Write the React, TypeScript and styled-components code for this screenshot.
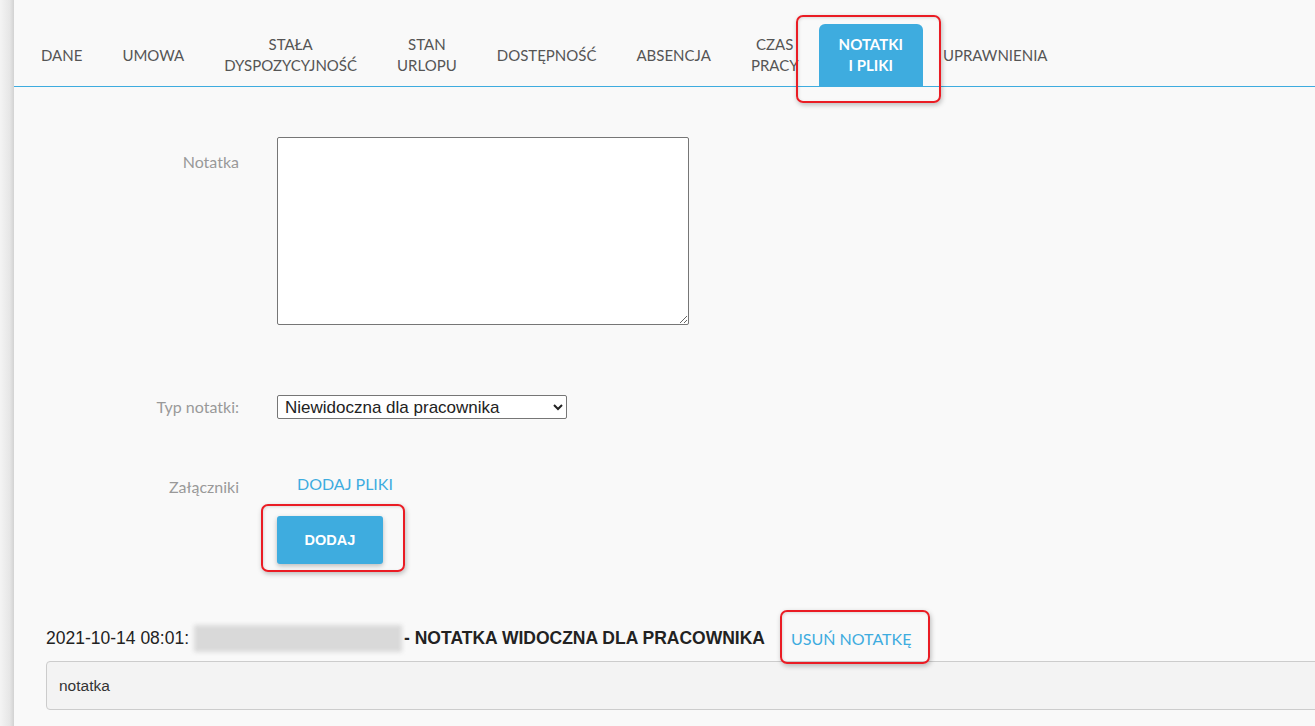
import styled, { createGlobalStyle } from 'styled-components';

const GlobalStyle = createGlobalStyle`
  html, body {
    margin: 0;
    padding: 0;
    background: #f9f9f9;
    overflow: hidden;
  }
  * { box-sizing: border-box; }
`;

const Page = styled.div`
  display: flex;
  height: 726px;
  overflow: hidden;
`;

const Edge = styled.div`
  flex: 0 0 14px;
  background: linear-gradient(to right, #f4f4f4 0%, #e6e6e6 70%, #d2d2d2 100%);
`;

const Main = styled.main`
  flex: 1;
  min-width: 0;
  padding-top: 24px;
  font-family: Lato, "Liberation Sans", sans-serif;
`;

const TabBar = styled.nav`
  display: flex;
  align-items: stretch;
  height: 63px;
  padding-left: 7px;
  border-bottom: 1px solid #3eacdf;
`;

const Tab = styled.div<{ $active?: boolean }>`
  position: relative;
  display: flex;
  align-items: center;
  justify-content: center;
  text-align: center;
  padding: 0 20px;
  font-size: 15px;
  line-height: 21px;
  text-transform: uppercase;
  color: ${(p) => (p.$active ? '#fff' : '#555')};
  font-weight: ${(p) => (p.$active ? 700 : 400)};
  background: ${(p) => (p.$active ? '#3eacdf' : 'transparent')};
  border-radius: 6px 6px 0 0;
  white-space: nowrap;
`;

const Highlight = styled.span<{ $t: number; $r: number; $b: number; $l: number }>`
  position: absolute;
  top: ${(p) => p.$t}px;
  right: ${(p) => p.$r}px;
  bottom: ${(p) => p.$b}px;
  left: ${(p) => p.$l}px;
  border: 2px solid #ea1c24;
  border-radius: 7px;
  box-shadow: 1px 2px 5px rgba(0, 0, 0, 0.25), inset 1px 1px 3px rgba(0, 0, 0, 0.12);
  pointer-events: none;
`;

const Form = styled.section`
  display: grid;
  grid-template-columns: 225px 1fr;
  column-gap: 38px;
  padding-top: 50px;
`;

const Label = styled.label<{ $pt: number }>`
  text-align: right;
  font-size: 16px;
  line-height: 20px;
  color: #999;
  padding-top: ${(p) => p.$pt}px;
`;

const Field = styled.div<{ $mt?: number }>`
  margin-top: ${(p) => p.$mt ?? 0}px;
`;

const NoteArea = styled.textarea`
  display: block;
  width: 412px;
  height: 188px;
  border: 1px solid #767676;
  border-radius: 2px;
  background: #fff;
  resize: both;
`;

const Select = styled.select`
  display: block;
  width: 290px;
  height: 24px;
  padding: 0 3px;
  font-family: "Liberation Sans", Arial, sans-serif;
  font-size: 17px;
  color: #222;
  background: #fff;
  border: 1px solid #767676;
  border-radius: 2px;
`;

const LinkButton = styled.span`
  display: inline-block;
  padding: 0 20px;
  font-size: 16px;
  line-height: 20px;
  color: #3eacdf;
  text-transform: uppercase;
`;

const ButtonWrap = styled.div`
  position: relative;
  display: inline-block;
  margin-top: 22px;
`;

const PrimaryButton = styled.button`
  display: block;
  width: 106px;
  height: 48px;
  border: none;
  border-radius: 3px;
  background: #3eacdf;
  color: #fff;
  font-family: "Liberation Sans", Arial, sans-serif;
  font-weight: 700;
  font-size: 14.5px;
  box-shadow: 0 2px 5px rgba(0, 0, 0, 0.25);
`;

const NoteSection = styled.section`
  padding: 60px 0 0 32px;
`;

const NoteHeader = styled.div`
  display: flex;
  align-items: center;
  height: 28px;
  font-family: "Liberation Sans", Arial, sans-serif;
  font-size: 17.5px;
  color: #222;
`;

const Blurred = styled.span`
  display: inline-block;
  width: 208px;
  height: 27px;
  margin: 0 2px 0 5px;
  background: #d9d9d9;
  filter: blur(2px);
`;

const Strong = styled.strong`
  font-weight: 700;
`;

const DeleteLink = styled.span`
  position: relative;
  margin-left: 26px;
  font-family: Lato, "Liberation Sans", sans-serif;
  font-size: 16px;
  color: #3eacdf;
`;

const NoteBox = styled.div`
  margin-top: 9px;
  margin-right: -20px;
  height: 49px;
  padding: 0 12px;
  display: flex;
  align-items: center;
  background: #f3f3f3;
  border: 1px solid #ccc;
  border-radius: 4px;
  font-family: "Liberation Sans", Arial, sans-serif;
  font-size: 15.5px;
  color: #333;
`;

const tabs = [
  ['Dane'],
  ['Umowa'],
  ['Stała', 'dyspozycyjność'],
  ['Stan', 'urlopu'],
  ['Dostępność'],
  ['Absencja'],
  ['Czas', 'pracy'],
  ['Notatki', 'i pliki'],
  ['Uprawnienia'],
];

export default function App() {
  return (
    <>
      <GlobalStyle />
      <Page>
        <Edge />
        <Main>
          <TabBar>
            {tabs.map((lines) => {
              const active = lines[0] === 'Notatki';
              return (
                <Tab key={lines[0]} $active={active}>
                  <div>
                    {lines.map((l, i) => (
                      <div key={i}>{l}</div>
                    ))}
                  </div>
                  {active && <Highlight $t={-9} $r={-18} $b={-17} $l={-23} />}
                </Tab>
              );
            })}
          </TabBar>

          <Form>
            <Label $pt={15}>Notatka</Label>
            <Field>
              <NoteArea />
            </Field>

            <Label $pt={72}>Typ notatki:</Label>
            <Field $mt={70}>
              <Select defaultValue="hidden">
                <option value="hidden">Niewidoczna dla pracownika</option>
                <option value="visible">Widoczna dla pracownika</option>
              </Select>
            </Field>

            <Label $pt={58}>Załączniki</Label>
            <Field $mt={55}>
              <LinkButton>Dodaj pliki</LinkButton>
              <div>
                <ButtonWrap>
                  <PrimaryButton>DODAJ</PrimaryButton>
                  <Highlight $t={-12} $r={-22} $b={-8} $l={-16} />
                </ButtonWrap>
              </div>
            </Field>
          </Form>

          <NoteSection>
            <NoteHeader>
              2021-10-14 08:01:
              <Blurred />
              <Strong>- NOTATKA WIDOCZNA DLA PRACOWNIKA</Strong>
              <DeleteLink>
                USUŃ NOTATKĘ
                <Highlight $t={-19} $r={-19} $b={-16} $l={-11} />
              </DeleteLink>
            </NoteHeader>
            <NoteBox>notatka</NoteBox>
          </NoteSection>
        </Main>
      </Page>
    </>
  );
}
